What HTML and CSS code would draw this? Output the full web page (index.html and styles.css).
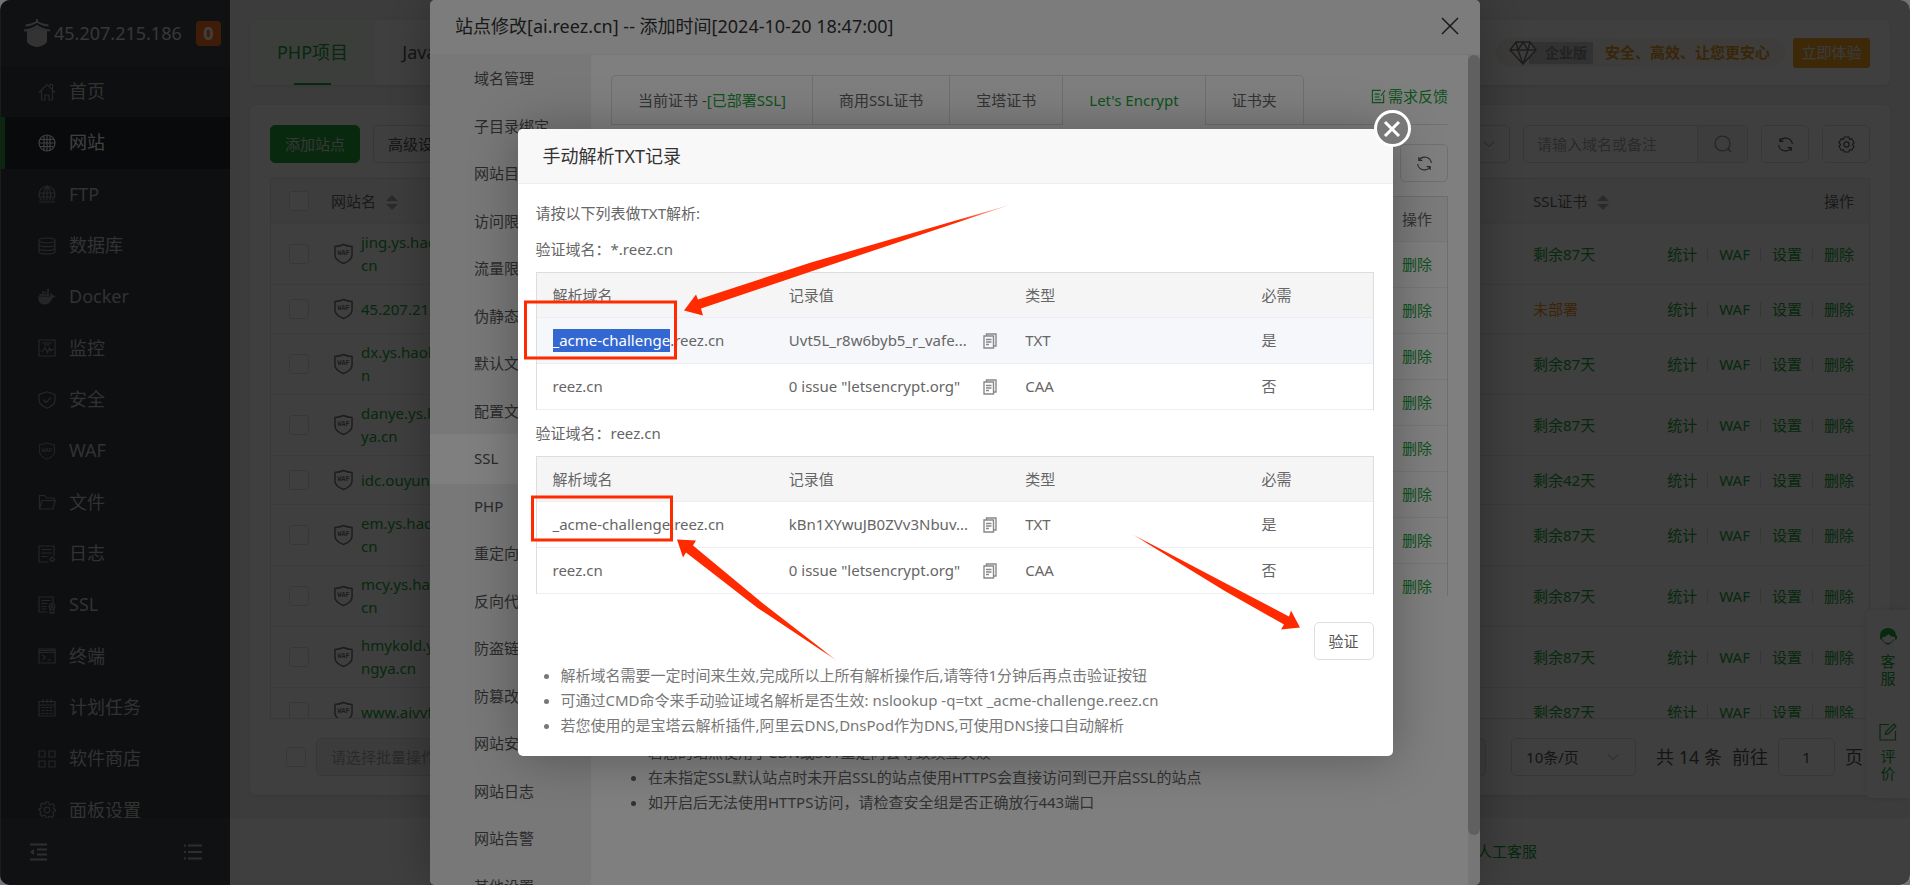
FILE: index.html
```html
<!DOCTYPE html>
<html lang="zh-CN">
<head>
<meta charset="utf-8">
<title>网站管理</title>
<link rel="stylesheet" href="styles.css">
</head>
<body>
<svg class="sprite" aria-hidden="true">
  <symbol id="i-home" viewBox="0 0 18 18"><path d="M1 9.5 9 1.5l8 8M3.5 8v9h3.5v-5h4v5h3.5V8M12 3V1.500h2.500V6"/></symbol>
  <symbol id="i-globe" viewBox="0 0 18 18"><circle cx="9" cy="9" r="8"/><path d="M6 1.800v14.400M12 1.800v14.400M9 1v16M1 9h16M2 5.500h14M2 12.500h14"/></symbol>
  <symbol id="i-ftp" viewBox="0 0 18 18"><path d="M4 15.500a8 8 0 1 1 10 0M6.500 15.500C4.500 11 5 5 9 1c4 4 4.500 10 2.500 14.500M9 1v14.500M1 8h16M2.500 12h13M1 17h16"/></symbol>
  <symbol id="i-db" viewBox="0 0 18 18"><ellipse cx="9" cy="3.500" rx="8" ry="2.500"/><path d="M1 3.500v11C1 16 4.500 17 9 17s8-1 8-2.500v-11M1 7.200c0 1.500 3.500 2.500 8 2.500s8-1 8-2.500M1 11c0 1.500 3.500 2.500 8 2.500s8-1 8-2.500"/></symbol>
  <symbol id="i-docker" viewBox="0 0 18 18"><path class="solid" d="M0 8.500h12.500c-.6-1.400-.3-2.600.6-3.500 1 .7 1.400 1.500 1.400 2.600 1-.3 2.300-.2 3.200.4-.6 1.200-1.700 1.700-3.200 1.700-1.500 4.300-4 6.800-8 6.800-4 0-6.500-3-6.500-8z"/><path class="solid" d="M1.500 6h2v2h-2zM4 6h2v2H4zM6.500 6h2v2h-2zM9 6h2v2H9zM4 3.500h2v2H4zM6.500 3.500h2v2h-2zM9 3.500h2v2H9zM9 1h2v2H9z"/></symbol>
  <symbol id="i-monitor" viewBox="0 0 18 18"><path d="M1 1h16v16H1zM4 4h10M6 6h6M2.500 12H5l2-3.500 2.500 5 2-4.500 1.500 3 1-1.500h2"/></symbol>
  <symbol id="i-safe" viewBox="0 0 18 18"><path d="M9 .8 17 3.500V9c0 4-3.500 6.500-8 8.300C4.500 15.500 1 13 1 9V3.500zM5 8.500l3 3 5-5"/></symbol>
  <symbol id="i-waf" viewBox="0 0 20 22"><path d="M10 1c3 1.500 6 2 9 2v9c0 4-4 7-9 9-5-2-9-5-9-9V3c3 0 6-.5 9-2z"/><text class="waf" x="10" y="12.500" text-anchor="middle">WAF</text></symbol>
  <symbol id="i-file" viewBox="0 0 18 18"><path d="M1.500 16V2.500h5l2 2.500h7.500v2.500M1.500 16 4 7.500h13.200L15 16z"/></symbol>
  <symbol id="i-log" viewBox="0 0 18 18"><path d="M10.500 17H1V1h15v9.500M3.500 4.500h10M3.500 8h10M3.500 11.500h6M14.300 11.500v1M14.300 16v1M11.500 14.300h1M16 14.300h1"/><circle cx="14.300" cy="14.300" r="1.900"/></symbol>
  <symbol id="i-ssl" viewBox="0 0 18 18"><path d="M9.500 16H1V1h14v6M3.500 4.500h9M3.500 7.500h6M3.500 10.500h5M3.500 13h5M12.200 13v4.500l1.800-1 1.800 1V13"/><circle cx="14" cy="10.500" r="2.800"/><circle cx="14" cy="10.500" r="1"/></symbol>
  <symbol id="i-term" viewBox="0 0 18 18"><path d="M1 2h16v14H1zM1 5.500h16M1 3.500h16M4.500 8l3 2.300-3 2.400M9.500 13h3.500"/></symbol>
  <symbol id="i-cal" viewBox="0 0 18 18"><path d="M1 2.500h16V17H1zM1 6h16M5 0v4M9 0v4M13 0v4M3.500 8.500h3M7.500 8.500h3M11.500 8.500h3M3.500 11.500h3M7.500 11.500h3M11.500 11.500h3M3.500 14.500h3M7.500 14.500h3M11.500 14.500h3"/></symbol>
  <symbol id="i-store" viewBox="0 0 18 18"><path d="M1 1h6v6H1zM11 1h6v6h-6zM1 11h6v6H1zM11 11h6v6h-6z"/></symbol>
  <symbol id="i-gear" viewBox="0 0 18 18"><path d="M7.500 1h3l.5 2.200 1.500.7 2-1.200 2 2-1.200 2 .6 1.500 1.600.3v1.500l-2 .9-.6 1.500 1 2-1.900 1.900-2-1.100-1.500.6L10 17H8l-.6-2.200-1.600-.6-2 1.100-1.900-1.900 1.100-2-.6-1.500L1 9.500v-1.500l1.900-.6.6-1.500-1.200-2 2-1.900 2 1.200 1.500-.6z"/><circle cx="9" cy="9" r="2.800"/></symbol>
  <symbol id="i-hex" viewBox="0 0 18 18"><path d="M6.600 1h4.800l.7 2.400 2.500-.4 2.400 4-1.700 2 1.700 2-2.400 4-2.500-.4-.7 2.400H6.600l-.7-2.400-2.500.4-2.400-4 1.700-2-1.700-2 2.400-4 2.500.4z"/><circle cx="9" cy="9" r="2.800"/></symbol>
  <symbol id="i-refresh" viewBox="0 0 18 18"><path d="M3 5.500A7.300 7.300 0 0 1 16.300 8.500M15 12.500A7.300 7.300 0 0 1 1.700 9.500M3 2v3.700h3.700M15 16v-3.700h-3.700"/></symbol>
  <symbol id="i-search" viewBox="0 0 18 18"><circle cx="8.500" cy="8.500" r="7.500"/><path d="m14 14 3 3"/></symbol>
  <symbol id="i-down" viewBox="0 0 12 8"><path d="m1 1.500 5 5 5-5"/></symbol>
  <symbol id="i-edit" viewBox="0 0 18 18"><path d="M10 1.500H1v15.500h15.500V8M6.500 11.500l.7-3L15 1l2 2-7.700 7.700z"/></symbol>
  <symbol id="i-note" viewBox="0 0 16 16"><path d="M10.500 1.500h-9v13h12V6M4 5.500h5M4 8.500h5M4 11.500h7M10.500 7.500 15 1.500"/></symbol>
  <symbol id="i-copy" viewBox="0 0 14 16"><path d="M1 3h9.500v12H1zM3.500 3V1H13v12h-2.500M3 6.500h5.500M3 9h5.500M3 11.500h3"/></symbol>
</svg>

<div class="shell">
  <aside class="sidebar">
    <header class="brand">
      <svg class="logo" viewBox="0 0 26 28" aria-hidden="true"><path d="M13 0v3M1.500 6.500C7 6 10 5 13 2.500c3 2.500 6 3.500 11.500 4M0 11.500C6 11 10 9.500 13 7c3 2.500 7 4 13 4.500"/><path class="solid" d="M3 12c4-.5 7-1.500 10-3.500 3 2 6 3 10 3.500v10c0 3-5 5.200-10 6-5-.8-10-3-10-6z"/></svg>
      <span class="ip">45.207.215.186</span>
      <span class="count">0</span>
    </header>
    <nav class="nav">
      <a href="#" class="nav-item"><svg class="ico"><use href="#i-home"/></svg>首页</a>
      <a href="#" class="nav-item active"><svg class="ico"><use href="#i-globe"/></svg>网站</a>
      <a href="#" class="nav-item"><svg class="ico"><use href="#i-ftp"/></svg>FTP</a>
      <a href="#" class="nav-item"><svg class="ico"><use href="#i-db"/></svg>数据库</a>
      <a href="#" class="nav-item"><svg class="ico"><use href="#i-docker"/></svg>Docker</a>
      <a href="#" class="nav-item"><svg class="ico"><use href="#i-monitor"/></svg>监控</a>
      <a href="#" class="nav-item"><svg class="ico"><use href="#i-safe"/></svg>安全</a>
      <a href="#" class="nav-item"><svg class="ico"><use href="#i-waf"/></svg>WAF</a>
      <a href="#" class="nav-item"><svg class="ico"><use href="#i-file"/></svg>文件</a>
      <a href="#" class="nav-item"><svg class="ico"><use href="#i-log"/></svg>日志</a>
      <a href="#" class="nav-item"><svg class="ico"><use href="#i-ssl"/></svg>SSL</a>
      <a href="#" class="nav-item"><svg class="ico"><use href="#i-term"/></svg>终端</a>
      <a href="#" class="nav-item"><svg class="ico"><use href="#i-cal"/></svg>计划任务</a>
      <a href="#" class="nav-item"><svg class="ico"><use href="#i-store"/></svg>软件商店</a>
      <a href="#" class="nav-item"><svg class="ico"><use href="#i-gear"/></svg>面板设置</a>
    </nav>
    <footer class="side-foot">
      <button type="button" class="bare" aria-label="收起菜单"><svg class="ico" viewBox="0 0 18 18"><path class="bold" d="M1 1.500h17M8 6.500h10M8 11.500h10M1 16.500h17"/><path class="solid" d="M1 9l4-3v6z"/></svg></button>
      <button type="button" class="bare" aria-label="菜单列表"><svg class="ico" viewBox="0 0 18 18"><path class="bold" d="M4 2.500h14M4 9h14M4 15.500h14M0 2.500h2M0 9h2M0 15.500h2"/></svg></button>
    </footer>
  </aside>

  <div class="page">
    <main class="main">
      <section class="card tabs-card">
        <a href="#" class="ptab on">PHP项目</a>
        <a href="#" class="ptab">Java项目</a>
        <div class="promo">
          <svg class="gem" viewBox="0 0 28 24" aria-hidden="true"><path d="M7 1h14l6 8-13 14L1 9zM1 9h26M9 9l5 14 5-14M7 1l2 8 5-8 5 8 2-8"/></svg>
          <span class="edition">企业版</span>
          <strong class="slogan">安全、高效、让您更安心</strong>
        </div>
        <button type="button" class="try">立即体验</button>
      </section>

      <section class="card list-card">
        <div class="toolbar">
          <button type="button" class="btn primary">添加站点</button>
          <button type="button" class="btn">高级设置</button>
          <span class="grow"></span>
          <button type="button" class="btn cate">全部分类<svg class="ico chev"><use href="#i-down"/></svg></button>
          <div class="search">
            <input type="text" aria-label="搜索" placeholder="请输入域名或备注">
            <button type="button" aria-label="搜索按钮"><svg class="ico"><use href="#i-search"/></svg></button>
          </div>
          <button type="button" class="btn square" aria-label="刷新"><svg class="ico"><use href="#i-refresh"/></svg></button>
          <button type="button" class="btn square" aria-label="设置"><svg class="ico"><use href="#i-hex"/></svg></button>
        </div>

        <div class="table-wrap">
          <table class="sites">
            <thead>
              <tr><th class="c-check"><input type="checkbox" aria-label="全选"></th><th class="c-name">网站名<i class="sort"></i></th><th></th><th class="c-ssl">SSL证书<i class="sort"></i></th><th class="c-ops">操作</th></tr>
            </thead>
            <tbody>
              <tr><td class="c-check"><input type="checkbox" aria-label="选择站点1"></td><td><div class="site"><svg class="ico shield"><use href="#i-waf"/></svg><a href="#">jing.ys.haoliangya.<br>cn</a></div></td><td></td><td><a href="#">剩余87天</a></td><td><div class="ops"><a href="#">统计</a><a href="#">WAF</a><a href="#">设置</a><a href="#">删除</a></div></td></tr>
              <tr><td class="c-check"><input type="checkbox" aria-label="选择站点2"></td><td><div class="site"><svg class="ico shield"><use href="#i-waf"/></svg><a href="#">45.207.215.186</a></div></td><td></td><td><a href="#" class="warn">未部署</a></td><td><div class="ops"><a href="#">统计</a><a href="#">WAF</a><a href="#">设置</a><a href="#">删除</a></div></td></tr>
              <tr><td class="c-check"><input type="checkbox" aria-label="选择站点3"></td><td><div class="site"><svg class="ico shield"><use href="#i-waf"/></svg><a href="#">dx.ys.haoliangya.c<br>n</a></div></td><td></td><td><a href="#">剩余87天</a></td><td><div class="ops"><a href="#">统计</a><a href="#">WAF</a><a href="#">设置</a><a href="#">删除</a></div></td></tr>
              <tr><td class="c-check"><input type="checkbox" aria-label="选择站点4"></td><td><div class="site"><svg class="ico shield"><use href="#i-waf"/></svg><a href="#">danye.ys.haoliang<br>ya.cn</a></div></td><td></td><td><a href="#">剩余87天</a></td><td><div class="ops"><a href="#">统计</a><a href="#">WAF</a><a href="#">设置</a><a href="#">删除</a></div></td></tr>
              <tr><td class="c-check"><input type="checkbox" aria-label="选择站点5"></td><td><div class="site"><svg class="ico shield"><use href="#i-waf"/></svg><a href="#">idc.ouyun.cn</a></div></td><td></td><td><a href="#">剩余42天</a></td><td><div class="ops"><a href="#">统计</a><a href="#">WAF</a><a href="#">设置</a><a href="#">删除</a></div></td></tr>
              <tr><td class="c-check"><input type="checkbox" aria-label="选择站点6"></td><td><div class="site"><svg class="ico shield"><use href="#i-waf"/></svg><a href="#">em.ys.haoliangya.<br>cn</a></div></td><td></td><td><a href="#">剩余87天</a></td><td><div class="ops"><a href="#">统计</a><a href="#">WAF</a><a href="#">设置</a><a href="#">删除</a></div></td></tr>
              <tr><td class="c-check"><input type="checkbox" aria-label="选择站点7"></td><td><div class="site"><svg class="ico shield"><use href="#i-waf"/></svg><a href="#">mcy.ys.haoliangya.<br>cn</a></div></td><td></td><td><a href="#">剩余87天</a></td><td><div class="ops"><a href="#">统计</a><a href="#">WAF</a><a href="#">设置</a><a href="#">删除</a></div></td></tr>
              <tr><td class="c-check"><input type="checkbox" aria-label="选择站点8"></td><td><div class="site"><svg class="ico shield"><use href="#i-waf"/></svg><a href="#">hmykold.ys.haolia<br>ngya.cn</a></div></td><td></td><td><a href="#">剩余87天</a></td><td><div class="ops"><a href="#">统计</a><a href="#">WAF</a><a href="#">设置</a><a href="#">删除</a></div></td></tr>
              <tr><td class="c-check"><input type="checkbox" aria-label="选择站点9"></td><td><div class="site"><svg class="ico shield"><use href="#i-waf"/></svg><a href="#">www.aiyvf.cn</a></div></td><td></td><td><a href="#">剩余87天</a></td><td><div class="ops"><a href="#">统计</a><a href="#">WAF</a><a href="#">设置</a><a href="#">删除</a></div></td></tr>
            </tbody>
          </table>
        </div>

        <div class="pager">
          <input type="checkbox" aria-label="批量选择">
          <select class="field batch" aria-label="批量操作" disabled><option>请选择批量操作</option></select>
          <span class="grow"></span>
          <button type="button" class="field ghost" disabled aria-label="批量执行"></button>
          <button type="button" class="field size">10条/页<svg class="ico chev"><use href="#i-down"/></svg></button>
          <span class="total">共 14 条</span>
          <label class="goto">前往<input class="field" type="text" value="1">页</label>
        </div>
      </section>
    </main>
    <footer class="page-foot"><a href="#">人工客服</a></footer>
  </div>

  <div class="float">
    <a href="#"><svg class="face" viewBox="0 0 18 18" aria-hidden="true"><path class="solid" d="M1 7a8 7 0 0 1 16 0l1 1v3l-2 1v-3C13 9 11 8 9.500 6 8 8 6 9 3 9.500V12L1 11V8z"/><path d="M3.500 11.500c1 3 3 4 5.500 4s4.500-1.500 5.500-4M7 16h4"/></svg><span>客服</span></a>
    <a href="#"><svg class="ico"><use href="#i-edit"/></svg><span>评价</span></a>
  </div>

  <div class="mask">
    <section class="modal edit">
      <header class="m-head">
        <h2>站点修改[ai.reez.cn] -- 添加时间[2024-10-20 18:47:00]</h2>
        <button type="button" class="bare" aria-label="关闭"><svg class="x" viewBox="0 0 18 18"><path d="m1 1 16 16M17 1 1 17"/></svg></button>
      </header>
      <div class="m-body">
        <nav class="m-menu">
          <a href="#">域名管理</a><a href="#">子目录绑定</a><a href="#">网站目录</a><a href="#">访问限制</a><a href="#">流量限制</a><a href="#">伪静态</a><a href="#">默认文档</a><a href="#">配置文件</a><a href="#" class="on">SSL</a><a href="#">PHP</a><a href="#">重定向</a><a href="#">反向代理</a><a href="#">防盗链</a><a href="#">防篡改</a><a href="#">网站安全</a><a href="#">网站日志</a><a href="#">网站告警</a><a href="#">其他设置</a>
        </nav>
        <div class="m-main">
          <div class="cert-tabs">
            <div class="cert-set">
              <a href="#">当前证书 -<em>[已部署SSL]</em></a><a href="#">商用SSL证书</a><a href="#">宝塔证书</a><a href="#" class="on">Let's Encrypt</a><a href="#">证书夹</a>
            </div>
            <a href="#" class="need"><svg class="ico"><use href="#i-note"/></svg>需求反馈</a>
          </div>
          <div class="cert-bar"><button type="button" class="btn square" aria-label="刷新证书"><svg class="ico"><use href="#i-refresh"/></svg></button></div>
          <div class="cert-table">
            <table>
              <thead><tr><th>操作</th></tr></thead>
              <tbody>
                <tr><td><a href="#">删除</a></td></tr><tr><td><a href="#">删除</a></td></tr><tr><td><a href="#">删除</a></td></tr><tr><td><a href="#">删除</a></td></tr><tr><td><a href="#">删除</a></td></tr><tr><td><a href="#">删除</a></td></tr><tr><td><a href="#">删除</a></td></tr><tr><td><a href="#">删除</a></td></tr>
              </tbody>
            </table>
          </div>
          <ul class="tips">
            <li>若您的站点使用了CDN或301重定向会导致续签失败</li>
            <li>在未指定SSL默认站点时未开启SSL的站点使用HTTPS会直接访问到已开启SSL的站点</li>
            <li>如开启后无法使用HTTPS访问，请检查安全组是否正确放行443端口</li>
          </ul>
        </div>
        <div class="scroll"><div class="thumb"></div></div>
      </div>
    </section>
  </div>

  <div class="mask">
    <section class="modal verify">
      <header class="v-head"><h2>手动解析TXT记录</h2></header>
      <button type="button" class="round" aria-label="关闭弹窗"><svg viewBox="0 0 18 18"><path d="m2 2 14 14M16 2 2 16"/></svg></button>
      <div class="v-body">
        <p>请按以下列表做TXT解析:</p>
        <p>验证域名：*.reez.cn</p>
        <table class="dns">
          <thead><tr><th>解析域名</th><th>记录值</th><th>类型</th><th class="last">必需</th></tr></thead>
          <tbody>
            <tr class="hover"><td><mark>_acme-challenge</mark>.reez.cn</td><td><div class="val"><span>Uvt5L_r8w6byb5_r_vafe...</span><button type="button" class="bare" aria-label="复制"><svg class="ico copy"><use href="#i-copy"/></svg></button></div></td><td>TXT</td><td>是</td></tr>
            <tr><td>reez.cn</td><td><div class="val"><span>0 issue "letsencrypt.org"</span><button type="button" class="bare" aria-label="复制"><svg class="ico copy"><use href="#i-copy"/></svg></button></div></td><td>CAA</td><td>否</td></tr>
          </tbody>
        </table>
        <p>验证域名：reez.cn</p>
        <table class="dns">
          <thead><tr><th>解析域名</th><th>记录值</th><th>类型</th><th class="last">必需</th></tr></thead>
          <tbody>
            <tr><td>_acme-challenge.reez.cn</td><td><div class="val"><span>kBn1XYwuJB0ZVv3Nbuv...</span><button type="button" class="bare" aria-label="复制"><svg class="ico copy"><use href="#i-copy"/></svg></button></div></td><td>TXT</td><td>是</td></tr>
            <tr><td>reez.cn</td><td><div class="val"><span>0 issue "letsencrypt.org"</span><button type="button" class="bare" aria-label="复制"><svg class="ico copy"><use href="#i-copy"/></svg></button></div></td><td>CAA</td><td>否</td></tr>
          </tbody>
        </table>
        <div class="v-act"><button type="button" class="btn">验证</button></div>
        <ul class="tips">
          <li>解析域名需要一定时间来生效,完成所以上所有解析操作后,请等待1分钟后再点击验证按钮</li>
          <li>可通过CMD命令来手动验证域名解析是否生效: nslookup -q=txt _acme-challenge.reez.cn</li>
          <li>若您使用的是宝塔云解析插件,阿里云DNS,DnsPod作为DNS,可使用DNS接口自动解析</li>
        </ul>
      </div>
      <svg class="marks" viewBox="0 0 875 626" aria-hidden="true">
        <defs>
          <linearGradient id="g1" gradientUnits="userSpaceOnUse" x1="440" y1="92" x2="494" y2="75"><stop offset="0" stop-color="#ff2a00"/><stop offset="1" stop-color="#ff2a00" stop-opacity=".2"/></linearGradient>
          <linearGradient id="g2" gradientUnits="userSpaceOnUse" x1="304" y1="520" x2="320" y2="532"><stop offset="0" stop-color="#ff2a00"/><stop offset="1" stop-color="#ff2a00" stop-opacity=".2"/></linearGradient>
          <linearGradient id="g3" gradientUnits="userSpaceOnUse" x1="630" y1="413" x2="613" y2="404"><stop offset="0" stop-color="#ff2a00"/><stop offset="1" stop-color="#ff2a00" stop-opacity=".2"/></linearGradient>
        </defs>
        <path class="box" d="M7.500 172.500h150v56h-150zM14.500 367.500h139v43h-139z"/>
        <path fill="url(#g1)" d="M166 181l12-16 2 5 113-37 200-58-200 67-110 37 2 7z"/>
        <path fill="url(#g2)" d="M159 410l19 1-3 5 70 58 75 58-81-54-71-55-3 5z"/>
        <path fill="url(#g3)" d="M782 498l-19 2 3-5-60-34-93-57 95 50 63 33 2-6z"/>
      </svg>
    </section>
  </div>
</div>
</body>
</html>
```

FILE: styles.css
```css
* { box-sizing: border-box; }
body {
  margin: 0;
  background: #737379;
  font: 15px/23px "Noto Sans", "Noto Sans CJK SC", sans-serif;
  color: #666;
}
a { color: #20a53a; text-decoration: none; }
h2, p, ul { margin: 0; font-weight: 400; }
button, input, select { font: inherit; color: inherit; margin: 0; }
em { font-style: normal; color: #20a53a; }
table { width: 100%; border-collapse: separate; border-spacing: 0; }
th { font-weight: 400; text-align: left; }
input[type="checkbox"] {
  appearance: none;
  display: block;
  flex: none;
  width: 20px;
  height: 20px;
  border: 1px solid #dcdfe6;
  border-radius: 3px;
  background: #fff;
}
.sprite { position: absolute; width: 0; height: 0; }
.ico {
  flex: none;
  width: 18px;
  height: 18px;
  fill: none;
  stroke: currentColor;
  stroke-width: 1.2;
}
.solid { fill: currentColor; stroke: none; }
.bold { stroke-width: 2; }
.waf { font: 700 7px "Liberation Mono", monospace; fill: currentColor; stroke: none; }
.bare { padding: 0; border: 0; background: none; display: flex; }
.grow { flex: 1; }
.chev { width: 12px; height: 8px; color: #999; stroke-width: 1; }

.shell {
  position: relative;
  display: flex;
  height: 100vh;
  overflow: hidden;
  border-radius: 10px;
  background: #f2f2f2;
}

/* sidebar */
.sidebar {
  display: flex;
  flex-direction: column;
  flex: none;
  width: 230px;
  background: #363c43;
  overflow: hidden;
  border-left: 1px solid #707070;
}
.brand {
  display: flex;
  align-items: center;
  height: 66px;
  padding: 0 9px 0 23px;
  background: #41464c;
  color: #ddd;
  font-size: 18px;
}
.logo { width: 26px; height: 28px; margin-right: 4px; fill: none; stroke: #ccc; stroke-width: 2; color: #ccc; }
.ip { flex: 1; }
.count {
  width: 25px;
  line-height: 25px;
  border-radius: 4px;
  background: #ff7020;
  color: #fff;
  text-align: center;
  font-weight: 700;
}
.nav {
  flex: 1;
  display: grid;
  grid-template-rows: repeat(15, 1fr);
  margin-bottom: -18px;
}
.nav-item {
  display: flex;
  align-items: center;
  gap: 13px;
  padding-left: 37px;
  font-size: 18px;
  color: #c8c8c8;
}
.nav-item .ico { color: #999; }
.nav-item.active {
  background: #25292e;
  color: #fff;
  border-left: 4px solid #20a53a;
  padding-left: 33px;
}
.nav-item.active .ico { color: #fff; }
.side-foot {
  position: relative;
  display: flex;
  align-items: center;
  justify-content: space-between;
  height: 67px;
  padding: 0 28px;
  background: #41464c;
  color: #bbb;
}

/* page */
.page { flex: 1; min-width: 0; display: flex; flex-direction: column; }
.main { flex: 1; display: flex; flex-direction: column; gap: 20px; padding: 20px 20px 23px; min-height: 0; }
.card { background: #fff; border-radius: 6px; box-shadow: 0 1px 4px rgba(0, 0, 0, .1); }
.tabs-card { display: flex; align-items: center; height: 65px; flex: none; padding-right: 20px; }
.ptab { width: 125px; line-height: 65px; text-align: center; font-size: 18px; color: #555; }
.ptab.on {
  color: #20a53a;
  border-radius: 6px 0 0 6px;
  background: linear-gradient(#20a53a, #20a53a) center bottom / 37px 2px no-repeat #f1f8ef;
}
.promo {
  display: flex;
  align-items: center;
  margin-left: auto;
  margin-right: 8px;
  padding: 0 15px 0 13px;
  height: 29px;
  border-radius: 15px;
  background: linear-gradient(90deg, #f5f2ea, #faf6ee);
}
.gem { position: relative; width: 28px; height: 24px; fill: #eee; stroke: #777; stroke-width: 1.5; }
.edition { margin: 0 12px 0 -8px; padding: 0 6px 0 16px; background: #c8c8c8; color: #888; font-weight: 700; font-size: 14px; line-height: 22px; }
.slogan { color: #e59a28; }
.try { width: 77px; height: 30px; padding: 0; border: 0; border-radius: 3px; background: #f5a623; color: #eee; }

.list-card { flex: 1; min-height: 0; display: flex; flex-direction: column; padding: 20px 20px 0; }
.toolbar { display: flex; gap: 13px; height: 38px; flex: none; }
.btn {
  padding: 0 14px;
  border: 1px solid #dcdfe6;
  border-radius: 5px;
  background: #fff;
  color: #555;
}
.btn.primary { border-color: #20a53a; background: #20a53a; color: #ddd; }
.btn.square { width: 48px; padding: 0; display: flex; align-items: center; justify-content: center; }
.square .ico { width: 17px; height: 17px; }
.cate { display: flex; align-items: center; gap: 55px; }
.search { display: flex; width: 225px; border: 1px solid #dcdfe6; border-radius: 5px; overflow: hidden; }
.search input { flex: 1; min-width: 0; border: 0; padding: 0 13px; }
.search input::placeholder { color: #aaa; }
.search button { display: flex; align-items: center; justify-content: center; width: 50px; padding: 0; border: 0; border-left: 1px solid #dcdfe6; background: #f7f7f7; color: #888; }

.table-wrap { flex: 1; min-height: 0; margin-top: 15px; overflow: hidden; border: 1px solid #e0e0e0; }
.sites { table-layout: fixed; }
.sites th { height: 45px; padding: 0; background: #f7f7f7; border-bottom: 1px solid #ebeef5; }
.sites td { height: 49px; padding: 7px 0; border-bottom: 1px solid #ebeef5; }
.sites .c-check { width: 60px; padding-left: 18px; }
.c-name { width: 260px; }
.c-ssl { width: 133px; }
.sites .c-ops { width: 203px; padding-right: 15px; text-align: right; }
.sort { display: inline-flex; flex-direction: column; gap: 3px; margin-left: 10px; vertical-align: middle; }
.sort::before { content: ""; border: 6px solid transparent; border-top: 0; border-bottom-color: #aaa; }
.sort::after { content: ""; border: 6px solid transparent; border-bottom: 0; border-top-color: #aaa; }
.site { display: flex; align-items: center; gap: 8px; padding-left: 3px; }
.shield { width: 19px; height: 22px; color: #777; stroke-width: 1.6; }
.warn { color: #f09020; }
.ops { display: flex; align-items: center; justify-content: flex-end; padding-right: 15px; }
.ops a { line-height: 15px; }
.ops a + a { margin-left: 10px; padding-left: 11px; border-left: 1px solid #dcdfe6; }

.pager { display: flex; align-items: center; height: 76px; flex: none; padding-left: 16px; gap: 10px; font-size: 18px; color: #555; }
.field { height: 38px; border: 1px solid #dcdfe6; border-radius: 5px; background: #fff; font-size: 15px; padding: 0 14px; }
.batch { appearance: none; width: 180px; background: #f2f3f5; color: #aaa; opacity: 1; }
.ghost { width: 80px; margin-right: 15px; background: #f2f3f5; }
.size { display: flex; align-items: center; justify-content: space-between; width: 125px; padding-right: 16px; margin-right: 10px; }
.goto { display: flex; align-items: center; gap: 10px; margin-right: 7px; }
.goto .field { width: 57px; padding: 0; text-align: center; }

.page-foot { height: 67px; flex: none; background: #fff; line-height: 67px; padding-left: 1247px; }

.float {
  position: absolute;
  right: 0;
  bottom: 87px;
  display: flex;
  flex-direction: column;
  gap: 36px;
  width: 44px;
  padding: 18px 14px 16px;
  border-radius: 5px 0 0 5px;
  background: #fff;
  box-shadow: 0 0 6px rgba(0, 0, 0, .12);
  line-height: 17px;
}
.float a { display: flex; flex-direction: column; align-items: center; gap: 7px; }
.face { width: 18px; height: 18px; fill: none; stroke: #20a53a; color: #20a53a; }
.float span { width: 15px; }

/* dialogs */
.mask {
  position: absolute;
  inset: 0;
  display: flex;
  align-items: center;
  justify-content: center;
  background: rgba(0, 0, 0, .5);
}
.modal { position: relative; background: #fff; border-radius: 5px; box-shadow: 1px 1px 50px rgba(0, 0, 0, .3); }
.edit { display: flex; flex-direction: column; width: 1050px; height: 100%; overflow: hidden; }
.m-head { display: flex; align-items: center; justify-content: space-between; height: 55px; flex: none; padding: 0 21px 2px 25px; background: #f8f8f8; border-bottom: 1px solid #eee; }
.m-head h2, .v-head h2 { font-size: 18px; color: #333; }
.x { width: 18px; height: 18px; stroke: #333; stroke-width: 1.5; }
.m-body { flex: 1; min-height: 0; display: flex; }
.m-menu { flex: none; width: 161px; display: grid; grid-template-rows: repeat(18, 1fr); margin-bottom: -25px; background: #f0f0f0; }
.m-menu a { display: flex; align-items: center; padding-left: 44px; color: #555; }
.m-menu .on { margin: -1px 0; background: #fff; }
.m-main { flex: 1; min-width: 0; padding: 20px; }
.cert-tabs { display: flex; justify-content: space-between; height: 50px; border-bottom: 1px solid #dcdfe6; }
.cert-set { display: flex; height: 50px; border: 1px solid #dcdfe6; border-bottom: 0; border-radius: 5px 5px 0 0; }
.cert-set a { padding: 0 26px; line-height: 49px; color: #666; }
.cert-set a + a { border-left: 1px solid #dcdfe6; }
.cert-set .on { color: #20a53a; background: #fff; }
.need { display: flex; align-items: center; gap: 2px; height: 42px; }
.need .ico { width: 15px; height: 15px; }
.cert-bar { display: flex; justify-content: flex-end; margin: 19px 0 14px; }
.cert-bar .btn { height: 38px; }
.cert-table { height: 400px; overflow: hidden; border: 1px solid #ddd; border-bottom: 0; }
.cert-table th, .cert-table td { height: 46px; padding: 0 15px; text-align: right; border-bottom: 1px solid #ebeef5; }
.cert-table th { height: 45px; background: #f6f6f6; }
.tips { padding-left: 25px; line-height: 25px; }
.m-main .tips { margin-top: 144px; padding-left: 37px; }

.scroll { flex: none; width: 12px; background: #ececec; }
.thumb { height: 94%; border-radius: 6px; background: #c0c0c0; }

.verify { width: 875px; }
.v-head { height: 55px; padding: 0 25px; background: #f8f8f8; border-bottom: 1px solid #eee; border-radius: 5px 5px 0 0; }
.v-head h2 { line-height: 54px; }
.round {
  position: absolute;
  top: -19px;
  right: -18px;
  display: flex;
  align-items: center;
  justify-content: center;
  width: 37px;
  height: 37px;
  padding: 0;
  border: 3px solid #fff;
  border-radius: 50%;
  background: #787878;
}
.round svg { width: 18px; height: 18px; stroke: #fff; stroke-width: 3; }
.v-body { padding: 11px 19px 18px 18px; }
.v-body p { line-height: 36px; }
.v-body p + table { margin-top: 5px; }
.dns { table-layout: fixed; border: 1px solid #ddd; border-bottom: 0; }
.dns + p { margin-top: 5px; }
.dns th, .dns td { padding: 0 12px 0 16px; height: 46px; border-bottom: 1px solid #ebeef5; white-space: nowrap; }
.dns th { height: 45px; background: #f5f5f5; }
.dns .last { width: 127px; }
.dns .hover td { background: #f5f7fa; }
.dns mark { display: inline-block; background: #3367d1; color: #fff; }
.val { display: flex; align-items: center; justify-content: space-between; }
.copy { width: 14px; height: 16px; color: #888; stroke-width: 1.4; }
.v-act { display: flex; justify-content: flex-end; margin: 28px 0 3px; }
.v-act .btn { height: 38px; width: 60px; padding: 0; }
.verify .tips { color: #777; }
.marks { position: absolute; inset: 0; width: 100%; height: 100%; pointer-events: none; }
.box { fill: none; stroke: #ff2a00; stroke-width: 3; }
```
